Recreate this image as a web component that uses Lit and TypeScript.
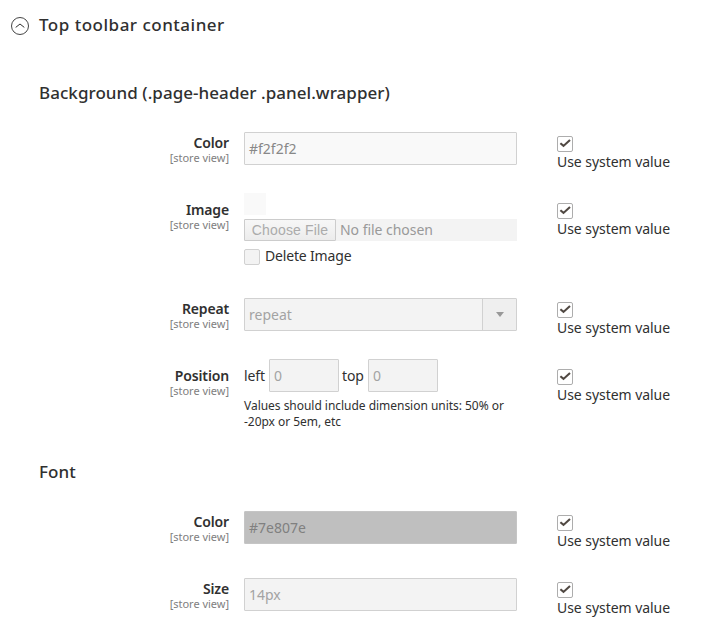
import { LitElement, html, css, svg, nothing, TemplateResult } from "lit";
import { customElement, property } from "lit/decorators.js";

@customElement("check-box")
class CheckBox extends LitElement {
  @property({ type: Boolean }) checked = false;
  @property({ type: Boolean }) disabled = false;
  static styles = css`
    :host { display: block; width: 16px; height: 16px; flex: none; }
    .box { box-sizing: border-box; width: 16px; height: 16px; border: 1px solid #adadad; border-radius: 2px; background: #fff; }
    .off { background: #f3f3f3; border-color: #d1d1d1; }
    svg { display: block; }
  `;
  render() {
    return html`<div class="box ${this.disabled ? "off" : ""}">
      ${this.checked
        ? html`<svg width="14" height="14" viewBox="0 0 14 14">${svg`<path d="M2.4 6.2 L5.5 8.9 L12 2.9" fill="none" stroke="#514943" stroke-width="2.1"/>`}</svg>`
        : nothing}
    </div>`;
  }
}

@customElement("config-row")
class ConfigRow extends LitElement {
  @property() label = "";
  static styles = css`
    :host { display: grid; grid-template-columns: 229px 273px 1fr; column-gap: 15px; align-items: start; font-size: 14px; color: #303030; }
    .label { text-align: right; display: flex; flex-direction: column; }
    .name { font-weight: 600; line-height: 18px; padding-top: 2px; letter-spacing: -0.15px; }
    .scope { font-size: 11px; line-height: 12px; color: #808080; letter-spacing: -0.02px; }
    .system { padding: 4px 0 0 25px; line-height: 20px; letter-spacing: -0.05px; }
  `;
  render() {
    return html`
      <div class="label"><span class="name">${this.label}</span><span class="scope">[store view]</span></div>
      <div class="value"><slot></slot></div>
      <div class="system"><check-box checked></check-box><div>Use system value</div></div>
    `;
  }
}

@customElement("app-root")
class AppRoot extends LitElement {
  static styles = css`
    :host { display: block; box-sizing: border-box; height: 635px; overflow: hidden; background: #fff; color: #303030; font: 14px/20px "Noto Sans", "Open Sans", sans-serif; }
    .title { display: flex; align-items: center; height: 24px; padding: 13px 0 0 11px; gap: 10px; }
    .title svg { margin-top: 2px; }
    h2, h3 { margin: 0; font-size: 17px; font-weight: 500; line-height: 24px; letter-spacing: 0.5px; }
    h3 { padding-left: 39px; letter-spacing: 0.05px; }
    .bg { margin-top: 44px; }
    .rows { display: grid; margin-top: 27px; }
    .bg-rows { grid-template-rows: 67px 99px 67px 95px; }
    .font-rows { grid-template-rows: 67px 57px; }
    .field { box-sizing: border-box; height: 33px; border: 1px solid #d1d1d1; border-radius: 1px; background: #f3f3f3; color: #a3a3a3; line-height: 31px; padding-left: 4px; }
    .light { background: #f9f9f9; color: #888; }
    .dark { background: #bfbfbf; border-color: #c5c5c5; color: #808080; }
    .select { display: flex; justify-content: space-between; }
    .arrow { width: 33px; border-left: 1px solid #d1d1d1; background: #efefef; display: grid; place-items: center; }
    .short { width: 70px; }
    .upload { margin-top: -6px; }
    .thumb { width: 22px; height: 22px; background: #f9f9f9; }
    .file { display: flex; margin-top: 4px; height: 22px; background: #f3f3f3; color: #999; line-height: 22px; letter-spacing: -0.04px; }
    .choose { box-sizing: border-box; width: 92px; height: 22px; border: 1px solid #ccc; border-radius: 1px; background: linear-gradient(#f7f7f7, #ececec); color: #ababab; font: 14px/20px "Liberation Sans", sans-serif; letter-spacing: 0.15px; text-align: center; margin-right: 4px; }
    .delete { display: flex; align-items: center; gap: 5px; margin-top: 5px; letter-spacing: -0.17px; }
    .delete check-box { margin-top: 2px; }
    .position { display: flex; align-items: center; gap: 3px; margin-top: -6px; }
    .position span { width: 23px; letter-spacing: -0.1px; }
    .position span:first-child { width: 22px; }
    .note { font-size: 12px; line-height: 16px; margin-top: 6px; letter-spacing: -0.03px; }
  `;
  render(): TemplateResult {
    return html`
      <div class="title">
        <svg width="18" height="18" viewBox="0 0 18 18" fill="none" stroke="#303030"><circle cx="9" cy="9" r="8.5" stroke-width="0.9"/><path d="M4.7 10.4 L9 7 L13.3 10.4"/></svg>
        <h2>Top toolbar container</h2>
      </div>
      <h3 class="bg">Background (.page-header .panel.wrapper)</h3>
      <div class="rows bg-rows">
        <config-row label="Color"><div class="field light">#f2f2f2</div></config-row>
        <config-row label="Image">
          <div class="upload">
            <div class="thumb"></div>
            <div class="file"><div class="choose">Choose File</div>No file chosen</div>
            <div class="delete"><check-box disabled></check-box>Delete Image</div>
          </div>
        </config-row>
        <config-row label="Repeat">
          <div class="field select">repeat<div class="arrow"><svg width="8" height="5" viewBox="0 0 8 5"><path d="M0 0H8L4 5Z" fill="#999"/></svg></div></div>
        </config-row>
        <config-row label="Position">
          <div class="position"><span>left</span><div class="field short">0</div><span>top</span><div class="field short">0</div></div>
          <div class="note">Values should include dimension units: 50% or -20px or 5em, etc</div>
        </config-row>
      </div>
      <h3>Font</h3>
      <div class="rows font-rows">
        <config-row label="Color"><div class="field dark">#7e807e</div></config-row>
        <config-row label="Size"><div class="field">14px</div></config-row>
      </div>
    `;
  }
}
